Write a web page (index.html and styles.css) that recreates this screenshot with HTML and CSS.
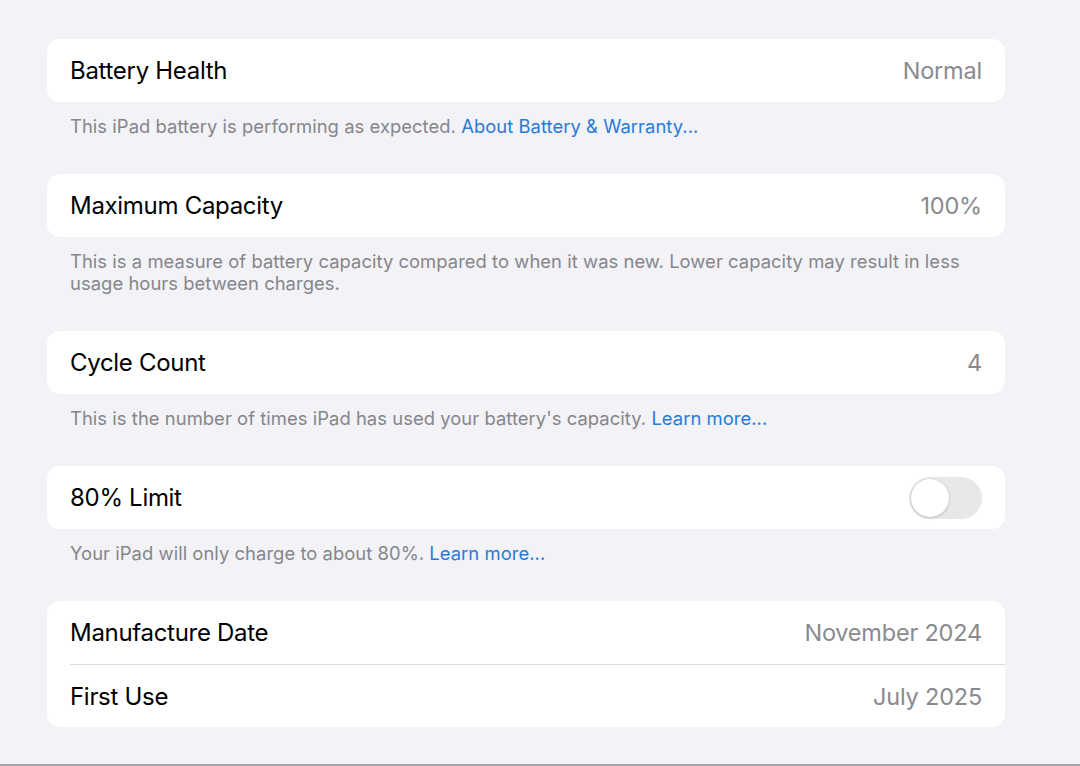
FILE: index.html
```html
<!DOCTYPE html>
<html lang="en">
<head>
<meta charset="utf-8">
<title>Battery</title>
<link rel="stylesheet" href="styles.css">
</head>
<body>
<main class="page">
  <section class="group">
    <div class="card">
      <div class="row"><span class="label">Battery Health</span><span class="value">Normal</span></div>
    </div>
    <p class="footer">This iPad battery is performing as expected. <a class="link">About Battery &amp; Warranty...</a></p>
  </section>
  <section class="group">
    <div class="card">
      <div class="row"><span class="label">Maximum Capacity</span><span class="value">100%</span></div>
    </div>
    <p class="footer">This is a measure of battery capacity compared to when it was new. Lower capacity may result in less usage hours between charges.</p>
  </section>
  <section class="group">
    <div class="card">
      <div class="row"><span class="label">Cycle Count</span><span class="value">4</span></div>
    </div>
    <p class="footer">This is the number of times iPad has used your battery's capacity. <a class="link">Learn more...</a></p>
  </section>
  <section class="group">
    <div class="card">
      <div class="row"><span class="label">80% Limit</span><span class="toggle"><span class="knob"></span></span></div>
    </div>
    <p class="footer">Your iPad will only charge to about 80%. <a class="link">Learn more...</a></p>
  </section>
  <section class="group">
    <div class="card">
      <div class="row"><span class="label">Manufacture Date</span><span class="value">November 2024</span></div>
      <div class="row divided"><span class="label">First Use</span><span class="value">July 2025</span></div>
    </div>
  </section>
</main>
</body>
</html>
```
FILE: styles.css
```css
html, body {
  margin: 0;
  padding: 0;
}
body {
  background: #f2f2f7;
  font-family: Inter, "Noto Sans", sans-serif;
  height: 766px;
  box-sizing: border-box;
  border-bottom: 2px solid #a3a3a6;
  overflow: hidden;
}
.page {
  padding: 39px 0 0 47px;
  width: 958px;
}
.group {
  margin-bottom: 37px;
}
.card {
  background: #ffffff;
  border-radius: 13px;
  overflow: hidden;
}
.row {
  height: 63px;
  display: flex;
  align-items: center;
  justify-content: space-between;
  padding: 0 23px;
  box-sizing: border-box;
}
.row.divided {
  margin-left: 23px;
  padding-left: 0;
  border-top: 1px solid #dcdce0;
  height: 63px;
}
.label {
  font-size: 24px;
  color: #000;
  letter-spacing: -0.3px;
}
.value {
  font-size: 23.5px;
  color: #8a8a8e;
  letter-spacing: -0.2px;
}
.footer {
  margin: 0;
  padding: 13px 23px 0 23px;
  font-size: 18.4px;
  line-height: 22px;
  color: #86868b;
  letter-spacing: 0.05px;
}
.link {
  color: #2a7bd8;
}
.toggle {
  width: 73px;
  height: 42px;
  border-radius: 21px;
  background: #e8e8ea;
  position: relative;
  display: block;
}
.knob {
  position: absolute;
  left: 2px;
  top: 2px;
  width: 38px;
  height: 38px;
  border-radius: 50%;
  background: #fff;
  box-shadow: 0 1px 3px rgba(0,0,0,0.18), 0 0 0 0.5px rgba(0,0,0,0.06);
}
```
